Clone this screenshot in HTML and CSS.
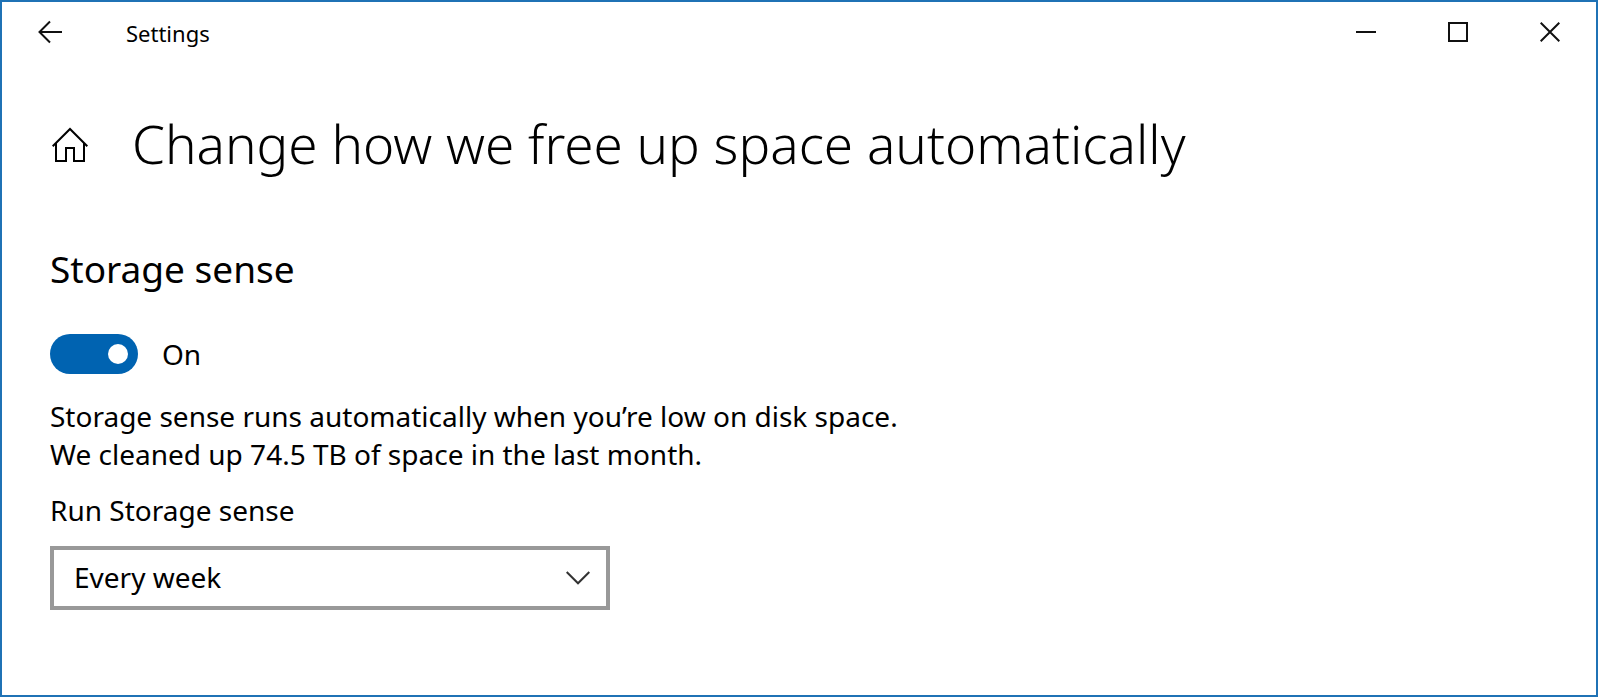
FILE: index.html
```html
<!DOCTYPE html>
<html lang="en">
<head>
<meta charset="utf-8">
<meta name="viewport" content="width=device-width, initial-scale=1">
<title>Settings</title>
<link rel="stylesheet" href="styles.css">
</head>
<body>
<div class="window">
  <header class="titlebar">
    <button class="titlebar-button titlebar-back" type="button" aria-label="Back">
      <svg class="icon" width="24" height="24" viewBox="0 0 24 24"><path d="M12 1.500L1.500 12L12 22.500M1.500 12H24"/></svg>
    </button>
    <span class="titlebar-name">Settings</span>
    <button class="titlebar-button" type="button" aria-label="Minimize">
      <svg class="icon" width="20" height="20" viewBox="0 0 20 20"><path d="M0 10H20"/></svg>
    </button>
    <button class="titlebar-button" type="button" aria-label="Maximize">
      <svg class="icon" width="20" height="20" viewBox="0 0 20 20"><path d="M1 1H19V19H1Z"/></svg>
    </button>
    <button class="titlebar-button" type="button" aria-label="Close">
      <svg class="icon" width="20" height="20" viewBox="0 0 20 20"><path d="M.7 .7L19.300 19.300M19.300 .7L.7 19.300"/></svg>
    </button>
  </header>
  <main class="content">
    <div class="page-head">
      <button class="home" type="button" aria-label="Home">
        <svg class="icon icon-home" width="36" height="36" viewBox="0 0 36 36"><path d="M.7 20.300L18 3L35.300 20.300M4 17V35H14V22H22V35H32V17"/></svg>
      </button>
      <h1 class="page-title">Change how we free up space automatically</h1>
    </div>
    <section>
      <h2 class="section-title">Storage sense</h2>
      <label class="switch-row">
        <input class="switch" type="checkbox" role="switch" checked>
        <span>On</span>
      </label>
      <p class="description">Storage sense runs automatically when you’re low on disk space.<br>We cleaned up 74.5 TB of space in the last month.</p>
      <label class="field-label" for="schedule">Run Storage sense</label>
      <div class="select-box">
        <select class="select" id="schedule">
          <option>Every day</option>
          <option selected>Every week</option>
          <option>Every month</option>
        </select>
        <svg class="icon icon-chevron" width="24" height="14" viewBox="0 0 24 14"><path d="M.7 1L12 12.300L23.300 1"/></svg>
      </div>
    </section>
  </main>
</div>
</body>
</html>
```
FILE: styles.css
```css
* {
  box-sizing: border-box;
}

body {
  margin: 0;
  background: #fff;
  color: #000;
  font: 28px/38px "Segoe UI", "Noto Sans", "Open Sans", sans-serif;
}

h1, h2, p {
  margin: 0;
}

button {
  display: flex;
  align-items: center;
  justify-content: center;
  padding: 0;
  border: 0;
  background: none;
  color: inherit;
}

.window {
  min-height: 100vh;
  border: 2px solid #1f72b5;
}

.icon {
  fill: none;
  stroke: #111;
  stroke-width: 2px;
}

.titlebar {
  display: flex;
  align-items: center;
  height: 60px;
}

.titlebar-button {
  width: 92px;
  height: 60px;
}

.titlebar-back {
  width: 96px;
}

.titlebar-name {
  flex: 1;
  padding: 2px 0 0 28px;
  font-size: 22px;
}

.content {
  padding: 46px 48px;
}

.page-head {
  display: flex;
  align-items: center;
  gap: 44px;
  padding-left: 2px;
}

.page-title {
  font-size: 53px;
  font-weight: 340;
  line-height: 72px;
}

.icon-home {
  stroke: #000;
}

.section-title {
  margin-top: 63px;
  font-size: 37px;
  font-weight: 400;
  line-height: 52px;
}

.switch-row {
  display: flex;
  align-items: center;
  width: max-content;
  gap: 24px;
  margin-top: 39px;
}

.switch {
  display: flex;
  align-items: center;
  justify-content: flex-end;
  appearance: none;
  width: 88px;
  height: 40px;
  margin: 0;
  padding: 10px;
  border-radius: 20px;
  background: #0063b1;
}

.switch::before {
  content: "";
  width: 20px;
  height: 20px;
  border-radius: 50%;
  background: #fff;
}

.switch:not(:checked) {
  justify-content: flex-start;
  background: #999;
}

.description {
  margin-top: 23px;
}

.field-label {
  display: block;
  margin-top: 18px;
}

.select-box {
  position: relative;
  max-width: 560px;
  margin-top: 17px;
}

.select {
  display: block;
  appearance: none;
  width: 100%;
  height: 64px;
  padding: 0 56px 2px 20px;
  border: 4px solid #999;
  border-radius: 0;
  background: #fff;
  color: inherit;
  font: inherit;
}

.icon-chevron {
  position: absolute;
  top: 25px;
  right: 20px;
  stroke: #333;
  pointer-events: none;
}
```
